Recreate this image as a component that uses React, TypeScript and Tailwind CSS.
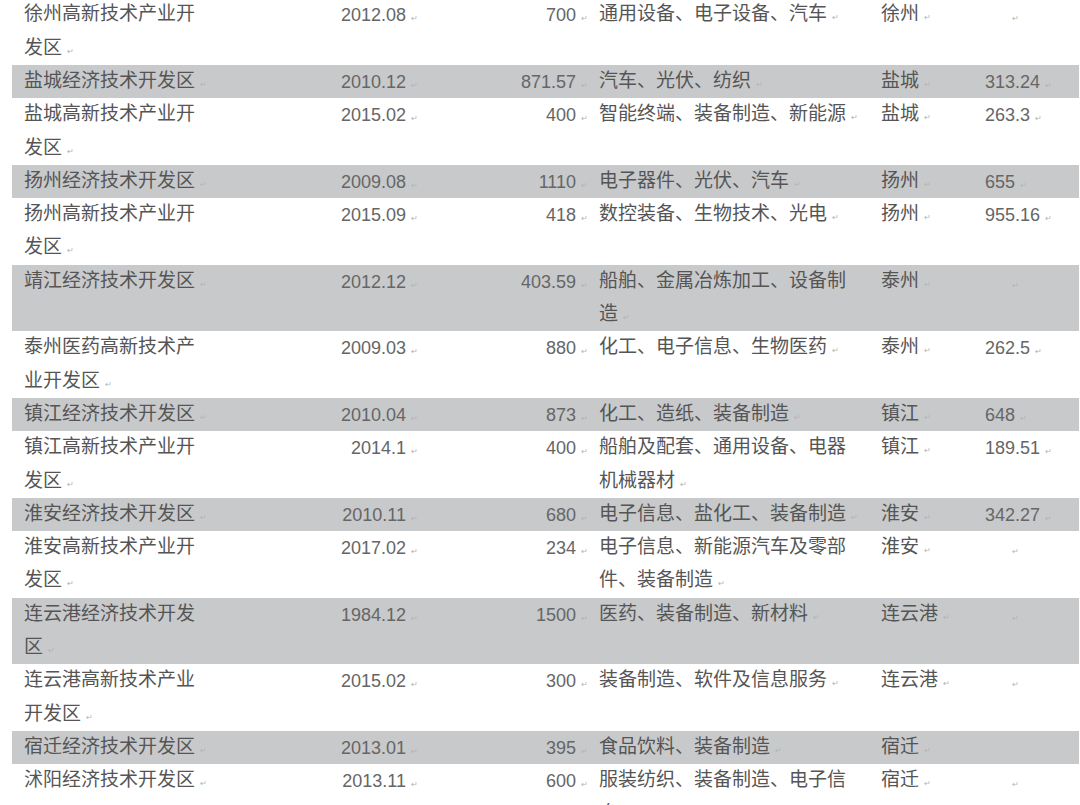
type Row = {
  name: string;
  date: string;
  area: string;
  industry: string;
  city: string;
  value?: string;
  emptyMark?: boolean;
};

const rows: Row[] = [
  { name: '徐州高新技术产业开发区', date: '2012.08', area: '700', industry: '通用设备、电子设备、汽车', city: '徐州', emptyMark: true },
  { name: '盐城经济技术开发区', date: '2010.12', area: '871.57', industry: '汽车、光伏、纺织', city: '盐城', value: '313.24' },
  { name: '盐城高新技术产业开发区', date: '2015.02', area: '400', industry: '智能终端、装备制造、新能源', city: '盐城', value: '263.3' },
  { name: '扬州经济技术开发区', date: '2009.08', area: '1110', industry: '电子器件、光伏、汽车', city: '扬州', value: '655' },
  { name: '扬州高新技术产业开发区', date: '2015.09', area: '418', industry: '数控装备、生物技术、光电', city: '扬州', value: '955.16' },
  { name: '靖江经济技术开发区', date: '2012.12', area: '403.59', industry: '船舶、金属冶炼加工、设备制造', city: '泰州', emptyMark: true },
  { name: '泰州医药高新技术产业开发区', date: '2009.03', area: '880', industry: '化工、电子信息、生物医药', city: '泰州', value: '262.5' },
  { name: '镇江经济技术开发区', date: '2010.04', area: '873', industry: '化工、造纸、装备制造', city: '镇江', value: '648' },
  { name: '镇江高新技术产业开发区', date: '2014.1', area: '400', industry: '船舶及配套、通用设备、电器机械器材', city: '镇江', value: '189.51' },
  { name: '淮安经济技术开发区', date: '2010.11', area: '680', industry: '电子信息、盐化工、装备制造', city: '淮安', value: '342.27' },
  { name: '淮安高新技术产业开发区', date: '2017.02', area: '234', industry: '电子信息、新能源汽车及零部件、装备制造', city: '淮安', emptyMark: true },
  { name: '连云港经济技术开发区', date: '1984.12', area: '1500', industry: '医药、装备制造、新材料', city: '连云港', emptyMark: true },
  { name: '连云港高新技术产业开发区', date: '2015.02', area: '300', industry: '装备制造、软件及信息服务', city: '连云港', emptyMark: true },
  { name: '宿迁经济技术开发区', date: '2013.01', area: '395', industry: '食品饮料、装备制造', city: '宿迁' },
  { name: '沭阳经济技术开发区', date: '2013.11', area: '600', industry: '服装纺织、装备制造、电子信息', city: '宿迁', emptyMark: true },
];

// Word's paragraph mark, drawn small and light
function Mark() {
  return <span className="ml-[5px] align-baseline text-[8px] leading-none text-[#b4b4b4]">↵</span>;
}

// Noto CJK sits low in its line box; pull it up a little so it lines up with the digits
const cjk = '-mt-[3px] mb-[3px] font-["Noto_Sans_CJK_SC",sans-serif] text-[19px] text-[#555555]';
const num = 'mt-[1px] -mb-[1px] font-["Liberation_Sans",Arial,sans-serif] text-[18px] text-[#666666]';

export default function App() {
  return (
    <div className="min-h-screen bg-white pl-[12px] leading-[33.3px]">
      <div className="-mt-[1.6px] w-[1067px]">
        {rows.map((r, i) => (
          <div
            key={r.name}
            className={
              'grid grid-cols-[209px_199px_170px_280px_105px_104px] ' +
              (i % 2 === 1 ? 'bg-[#c8c9cb]' : 'bg-white')
            }
          >
            <div className={`${cjk} pl-[12px] pr-[12px]`}>
              {r.name}
              <Mark />
            </div>
            <div className={`${num} pr-[2px] text-right`}>
              {r.date}
              <Mark />
            </div>
            <div className={`${num} pr-[2px] text-right`}>
              {r.area}
              <Mark />
            </div>
            <div className={`${cjk} pl-[9px] pr-[10px]`}>
              {r.industry}
              <Mark />
            </div>
            <div className={`${cjk} pl-[11px]`}>
              {r.city}
              <Mark />
            </div>
            <div className={`${num} pl-[10px]`}>
              {r.value && (
                <>
                  {r.value}
                  <Mark />
                </>
              )}
              {r.emptyMark && (
                <span className="pl-[22px]">
                  <Mark />
                </span>
              )}
            </div>
          </div>
        ))}
      </div>
    </div>
  );
}
